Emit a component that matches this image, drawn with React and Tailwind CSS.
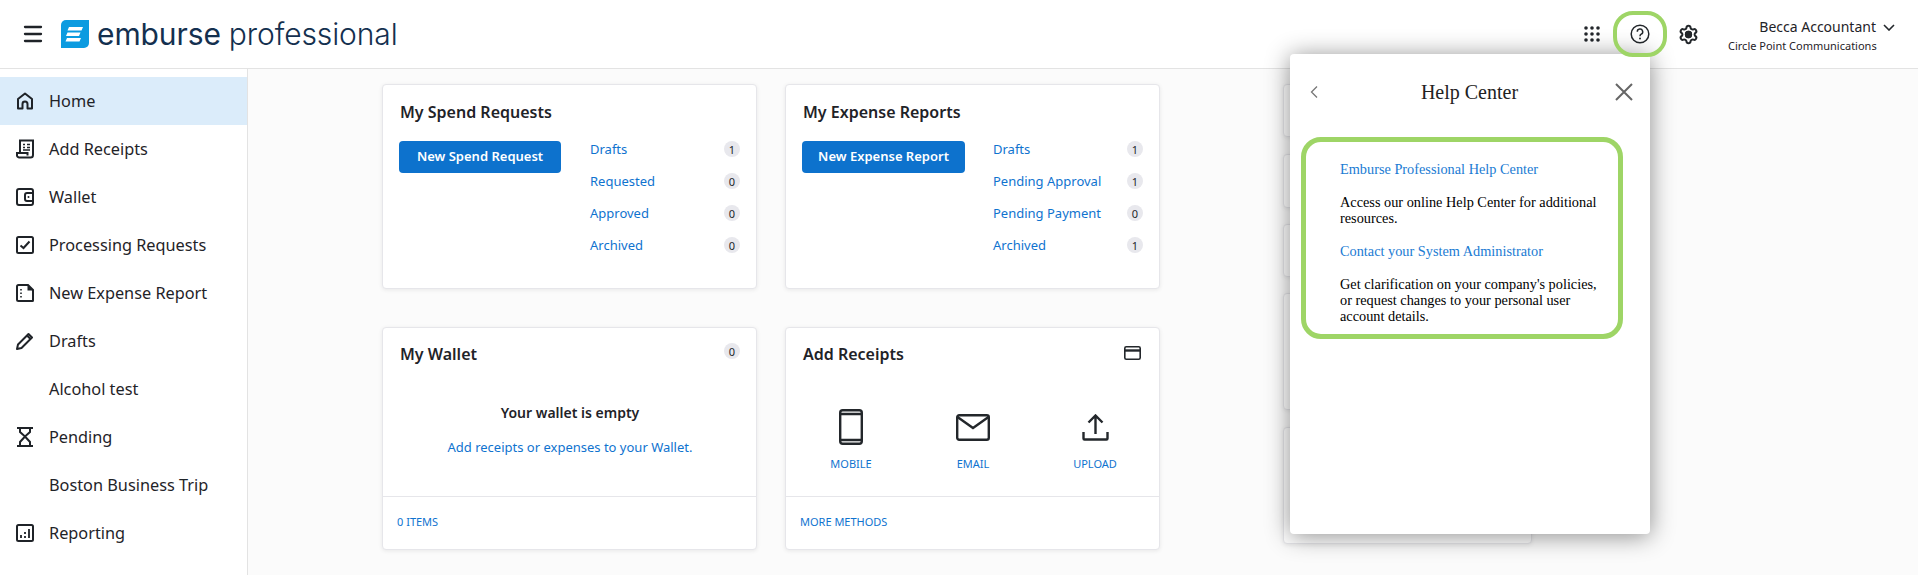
import { Menu, Settings } from 'lucide-react'

const sans = 'font-["Noto_Sans","Open_Sans",sans-serif]'

function HomeIcon() {
  return (
    <svg width="18" height="18" viewBox="0 0 18 18" fill="none" stroke="currentColor" strokeWidth="2" strokeLinejoin="round">
      <path d="M2 16.5V7l7-5.500L16 7v9.500h-4.500V12a2.500 2.500 0 0 0-5 0v4.500z" />
    </svg>
  )
}

function ReceiptIcon() {
  return (
    <svg width="18" height="20" viewBox="0 0 18 20" fill="none" stroke="currentColor" strokeWidth="2">
      <path d="M4 14V1.500h13V16a2.500 2.500 0 0 1-2.500 2.500H3A2.200 2.200 0 0 1 1 16v-2h10.500v2.500" />
      <path d="M7 5.500h2M11 5.500h3M7 8.500h2M11 8.500h3M7 11h7" strokeWidth="1.500" />
    </svg>
  )
}

function WalletIcon() {
  return (
    <svg width="18" height="18" viewBox="0 0 18 18" fill="none" stroke="currentColor" strokeWidth="2">
      <rect x="1" y="1" width="16" height="16" rx="2" />
      <path d="M17 5h-6a2 2 0 0 0-2 2v4a2 2 0 0 0 2 2h6" />
      <circle cx="12.500" cy="9" r="1" fill="currentColor" stroke="none" />
    </svg>
  )
}

function CheckIcon() {
  return (
    <svg width="18" height="18" viewBox="0 0 18 18" fill="none" stroke="currentColor" strokeWidth="2">
      <rect x="1" y="1" width="16" height="16" rx="1.500" />
      <path d="M4.500 9.500L7.500 12l6-6.500" />
    </svg>
  )
}

function DocIcon() {
  return (
    <svg width="18" height="18" viewBox="0 0 18 18" fill="none" stroke="currentColor" strokeWidth="2">
      <path d="M2.500 1H12l5 5v10.500a.5.5 0 0 1-.5.5h-14A1.500 1.500 0 0 1 1 15.500v-13A1.500 1.500 0 0 1 2.500 1z" />
      <path d="M11.500 1l5.500 5.500h-5.500z" fill="currentColor" stroke="none" />
      <path d="M5 5v1.500M5 8.500V10M5 12v1.500" strokeWidth="1.600" />
    </svg>
  )
}

function PencilIcon() {
  return (
    <svg width="18" height="18" viewBox="0 0 18 18" fill="none" stroke="currentColor" strokeWidth="2" strokeLinejoin="round">
      <path d="M1 17l1-4.500L12.500 2l3.500 3.500L5.500 16z" />
      <path d="M11 3.500L14.500 7" />
    </svg>
  )
}

function HourglassIcon() {
  return (
    <svg width="16" height="20" viewBox="0 0 16 20" fill="none" stroke="currentColor" strokeWidth="2">
      <path d="M0 1h16M0 19h16" />
      <path d="M3 1v4l5 4.500 5-4.500V1M3 19v-4l5-5.500 5 5.500v4" />
    </svg>
  )
}

function ChartIcon() {
  return (
    <svg width="18" height="18" viewBox="0 0 18 18" fill="none" stroke="currentColor" strokeWidth="2">
      <rect x="1" y="1" width="16" height="16" rx="1.500" />
      <path d="M5 11v3M9 12v2M9 8v2M13 5v9" strokeWidth="1.800" />
    </svg>
  )
}

const navItems = [
  { label: 'Home', icon: <HomeIcon />, active: true },
  { label: 'Add Receipts', icon: <ReceiptIcon /> },
  { label: 'Wallet', icon: <WalletIcon /> },
  { label: 'Processing Requests', icon: <CheckIcon /> },
  { label: 'New Expense Report', icon: <DocIcon /> },
  { label: 'Drafts', icon: <PencilIcon /> },
  { label: 'Alcohol test' },
  { label: 'Pending', icon: <HourglassIcon /> },
  { label: 'Boston Business Trip' },
  { label: 'Reporting', icon: <ChartIcon /> },
]

function Badge({ children }) {
  return (
    <span className="flex h-4 w-4 items-center justify-center rounded-full bg-[#e8e8ed] text-[11px] leading-none text-[#23272b]">
      {children}
    </span>
  )
}

function Card({ className = '', children }) {
  return (
    <section className={`rounded-[4px] border border-[#e6e6ea] bg-white shadow-[0_1px_4px_rgba(0,0,0,0.08)] ${className}`}>
      {children}
    </section>
  )
}

function ListCard({ title, button, rows, btnWidth }) {
  return (
    <Card className="h-[205px] w-[375px] pl-[17px] pr-[16px] pt-[14px]">
      <h2 className="text-[16px] font-semibold leading-[26px] text-[#1f2328]">{title}</h2>
      <div className="mt-[8px] flex justify-between">
        <button className={`-ml-[1px] mt-[8px] h-8 rounded-[4px] bg-[#0d72cd] text-[13px] font-semibold text-white ${btnWidth}`}>{button}</button>
        <ul className="w-[150px]">
          {rows.map(([name, count]) => (
            <li key={name} className="flex h-8 items-center justify-between text-[13px] text-[#0f73cf]">
              <span className="mt-[2px]">{name}</span>
              <Badge>{count}</Badge>
            </li>
          ))}
        </ul>
      </div>
    </Card>
  )
}

function CardFooter({ label, pad }) {
  return (
    <div className={`flex h-[53px] items-center border-t border-[#e6e6ea] pb-[2px] text-[11px] text-[#0f73cf] ${pad}`}>{label}</div>
  )
}

function Phone() {
  return (
    <svg width="24" height="36" viewBox="0 0 24 36" fill="none" stroke="#23272b" strokeWidth="2.400">
      <rect x="1.200" y="1.200" width="21.600" height="33.600" rx="2.500" />
      <path d="M1.200 5h21.600M1.200 31h21.600" />
    </svg>
  )
}

function Mail() {
  return (
    <svg width="34" height="27" viewBox="0 0 34 27" fill="none" stroke="#23272b" strokeWidth="2.400">
      <rect x="1.200" y="1.200" width="31.600" height="24.600" rx="2" />
      <path d="M1.500 3L17 14 32.500 3" />
    </svg>
  )
}

function Upload() {
  return (
    <svg width="27" height="27" viewBox="0 0 27 27" fill="none" stroke="#23272b" strokeWidth="2.400">
      <path d="M13.500 20V2M6.500 8.500l7-7 7 7" />
      <path d="M1.500 18v6.500a1 1 0 0 0 1 1h22a1 1 0 0 0 1-1V18" />
    </svg>
  )
}

function ReceiptMethod({ icon, label }) {
  return (
    <div className="flex w-[122px] shrink-0 flex-col items-center">
      <div className="flex h-9 items-center">{icon}</div>
      <span className="mt-[11px] text-[11px] leading-[16px] text-[#0f73cf]">{label}</span>
    </div>
  )
}

export default function App() {
  return (
    <div className={`relative h-[575px] w-[1918px] overflow-hidden bg-white text-[#1f2328] ${sans}`}>
      {/* Top bar */}
      <header className="flex h-[69px] items-center border-b border-[#e3e3e3] bg-white">
        <Menu className="ml-[21px] h-6 w-6" strokeWidth={2.3} />
        <svg className="ml-[16px]" width="28" height="28" viewBox="0 0 28 28">
          <path d="M5 0h23v23a5 5 0 0 1-5 5H0V5a5 5 0 0 1 5-5z" fill="#0c9be0" />
          <path d="M8 7h14l-1.500 3.500H6.500zM6.500 12.500h13L18 16H5zM6 18h14l-1.500 3.500H4.500z" fill="#fff" />
        </svg>
        <div className='ml-[8px] flex items-baseline gap-[8px] font-["Inter",sans-serif] text-[30px] leading-none tracking-[-0.1px] text-[#14304f]'>
          <span className="font-normal">emburse</span>
          <span className="font-[350]">professional</span>
        </div>
        <div className="ml-auto flex items-center">
          <svg width="16" height="16" viewBox="0 0 16 16" fill="#23272b">
            <circle cx="2" cy="2" r="1.800" /><circle cx="8" cy="2" r="1.800" /><circle cx="14" cy="2" r="1.800" />
            <circle cx="2" cy="8" r="1.800" /><circle cx="8" cy="8" r="1.800" /><circle cx="14" cy="8" r="1.800" />
            <circle cx="2" cy="14" r="1.800" /><circle cx="8" cy="14" r="1.800" /><circle cx="14" cy="14" r="1.800" />
          </svg>
          <svg className="ml-[30px]" width="20" height="20" viewBox="0 0 20 20" fill="none">
            <circle cx="10" cy="10" r="8.800" stroke="#23272b" strokeWidth="1.500" />
            <path d="M7.300 7.800a2.700 2.700 0 1 1 3.900 2.400c-.9.500-1.200 1.100-1.200 2" stroke="#23272b" strokeWidth="1.500" />
            <circle cx="10" cy="14.600" r="1" fill="#23272b" />
          </svg>
          <Settings className="ml-[28px] h-[21px] w-[21px] text-[#23272b]" strokeWidth={2.3}>
            <circle cx="12" cy="12" r="3" fill="currentColor" />
          </Settings>
          <div className="ml-[29px] mt-[4px] w-[148px] text-right">
            <div className="text-[14px] leading-[18px] text-[#1f2328]">Becca Accountant</div>
            <div className="mt-[2px] whitespace-nowrap text-[11px] leading-[16px] text-[#1f2328]">Circle Point Communications</div>
          </div>
          <svg className="mb-[14px] ml-[7px] mr-[23px]" width="12" height="7" viewBox="0 0 12 7" fill="none" stroke="#23272b" strokeWidth="1.600">
            <path d="M1 1l5 5 5-5" />
          </svg>
        </div>
      </header>

      <div className="flex h-[506px]">
        {/* Sidebar */}
        <nav className="h-full w-[248px] shrink-0 border-r border-[#e3e3e3] bg-white pt-2">
          {navItems.map(item => (
            <div key={item.label} className={`flex h-12 items-center text-[16.3px] ${item.active ? 'bg-[#dbecfa]' : ''}`}>
              <span className="flex w-[49px] shrink-0 justify-center pl-[1px]">{item.icon}</span>
              {item.label}
            </div>
          ))}
        </nav>

        {/* Dashboard */}
        <main className="flex flex-1 gap-[28px] bg-[#fbfbfb] pl-[134px] pt-[15px]">
          <div className="flex flex-col gap-[38px]">
            <ListCard
              title="My Spend Requests"
              button="New Spend Request"
              btnWidth="w-[162px]"
              rows={[['Drafts', 1], ['Requested', 0], ['Approved', 0], ['Archived', 0]]}
            />
            <Card className="flex h-[223px] w-[375px] flex-col">
              <div className="flex flex-1 flex-col pl-[17px] pr-[16px] pt-[13px]">
                <div className="flex items-start justify-between">
                  <h2 className="text-[16px] font-semibold leading-[26px]">My Wallet</h2>
                  <div className="pt-[2px]"><Badge>0</Badge></div>
                </div>
                <p className="mt-[36px] text-center text-[14px] font-semibold leading-[20px]">Your wallet is empty</p>
                <p className="mt-[14px] text-center text-[13px] leading-[20px] text-[#0f73cf]">Add receipts or expenses to your Wallet.</p>
              </div>
              <CardFooter label="0 ITEMS" pad="pl-[14px]" />
            </Card>
          </div>

          <div className="flex flex-col gap-[38px]">
            <ListCard
              title="My Expense Reports"
              button="New Expense Report"
              btnWidth="w-[163px]"
              rows={[['Drafts', 1], ['Pending Approval', 1], ['Pending Payment', 0], ['Archived', 1]]}
            />
            <Card className="flex h-[223px] w-[375px] flex-col">
              <div className="flex flex-1 flex-col pl-[17px] pr-[18px] pt-[13px]">
                <div className="flex items-start justify-between">
                  <h2 className="text-[16px] font-semibold leading-[26px]">Add Receipts</h2>
                  <svg className="mt-[5px]" width="17" height="14" viewBox="0 0 17 14" fill="none" stroke="#23272b" strokeWidth="1.600">
                    <rect x=".8" y=".8" width="15.400" height="12.400" rx="1.500" />
                    <path d="M.8 4.500h15.400" strokeWidth="2.400" />
                  </svg>
                </div>
                <div className="-ml-[13px] mt-[42px] flex">
                  <ReceiptMethod icon={<Phone />} label="MOBILE" />
                  <ReceiptMethod icon={<Mail />} label="EMAIL" />
                  <ReceiptMethod icon={<Upload />} label="UPLOAD" />
                </div>
              </div>
              <CardFooter label="MORE METHODS" pad="pl-[14px]" />
            </Card>
          </div>

          {/* Column mostly hidden behind the Help Center panel */}
          <div className="ml-[95px] flex flex-col">
            <Card className="h-[53px] w-[249px]" />
            <Card className="mt-[17px] h-[54px] w-[249px]" />
            <Card className="mt-[16px] h-[53px] w-[249px]" />
            <Card className="mt-[16px] h-[117px] w-[249px]" />
            <Card className="mt-[17px] h-[117px] w-[249px]" />
          </div>
        </main>
      </div>

      {/* Help Center panel */}
      <div className='absolute left-[1290px] top-[54px] h-[480px] w-[360px] rounded-[4px] bg-white font-["Liberation_Serif",serif] shadow-[0_2px_24px_rgba(0,0,0,0.45)]'>
        <div className="flex h-[76px] items-center justify-between pl-[20px] pr-[17px]">
          <svg width="8" height="14" viewBox="0 0 8 14" fill="none" stroke="#777" strokeWidth="1.300"><path d="M7 1.500L1.500 7 7 12.500" /></svg>
          <h2 className="ml-[6px] text-[20px] text-[#222]">Help Center</h2>
          <svg width="18" height="18" viewBox="0 0 18 18" fill="none" stroke="#666" strokeWidth="2"><path d="M1 1l16 16M17 1L1 17" /></svg>
        </div>
        <div className="ml-[11px] mr-[27px] mt-[7px] h-[202px] rounded-[20px] border-[5px] border-[#9ed566] pl-[34px] pr-[14px] pt-[19px] text-[14.3px] leading-[16px] text-black">
          <a className="block text-[#1a7bd3]">Emburse Professional Help Center</a>
          <p className="mt-[17px]">Access our online Help Center for additional resources.</p>
          <a className="mt-[17px] block text-[#1a7bd3]">Contact your System Administrator</a>
          <p className="mt-[17px]">Get clarification on your company's policies, or request changes to your personal user account details.</p>
        </div>
      </div>

      {/* Highlight ring on the help icon */}
      <div className="absolute left-[1613px] top-[11px] h-[46px] w-[54px] rounded-[20px] border-4 border-[#9ed566]" />
    </div>
  )
}
